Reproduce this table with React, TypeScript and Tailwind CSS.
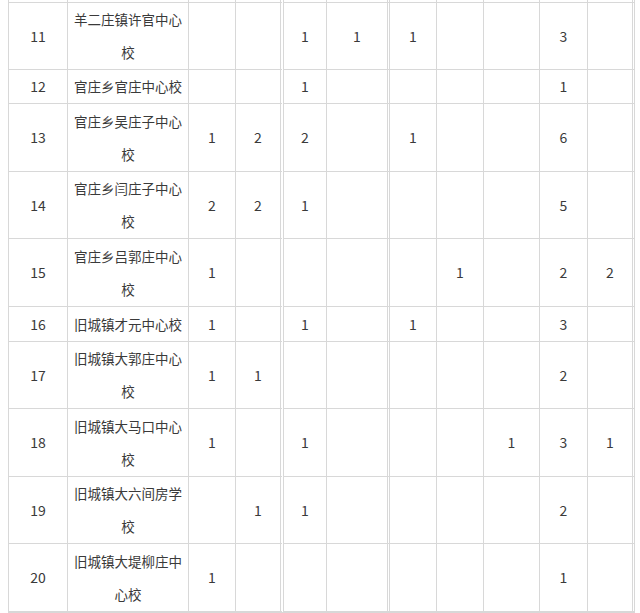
import React from 'react';

type Row = { no: number; name: string; vals: string[]; h: string };

const rows: Row[] = [
  { no: 11, name: '羊二庄镇许官中心校', vals: ['', '', '1', '1', '1', '', '', '3', ''], h: 'h-[67px]' },
  { no: 12, name: '官庄乡官庄中心校', vals: ['', '', '1', '', '', '', '', '1', ''], h: 'h-[34px]' },
  { no: 13, name: '官庄乡吴庄子中心校', vals: ['1', '2', '2', '', '1', '', '', '6', ''], h: 'h-[68px]' },
  { no: 14, name: '官庄乡闫庄子中心校', vals: ['2', '2', '1', '', '', '', '', '5', ''], h: 'h-[67px]' },
  { no: 15, name: '官庄乡吕郭庄中心校', vals: ['1', '', '', '', '', '1', '', '2', '2'], h: 'h-[68px]' },
  { no: 16, name: '旧城镇才元中心校', vals: ['1', '', '1', '', '1', '', '', '3', ''], h: 'h-[35px]' },
  { no: 17, name: '旧城镇大郭庄中心校', vals: ['1', '1', '', '', '', '', '', '2', ''], h: 'h-[66px]' },
  { no: 18, name: '旧城镇大马口中心校', vals: ['1', '', '1', '', '', '', '1', '3', '1'], h: 'h-[68px]' },
  { no: 19, name: '旧城镇大六间房学校', vals: ['', '1', '1', '', '', '', '', '2', ''], h: 'h-[67px]' },
  { no: 20, name: '旧城镇大堤柳庄中心校', vals: ['1', '', '', '', '', '', '', '1', ''], h: 'h-[68px]' },
];

// widths of the 11 columns, borders included
const widths = [
  'w-[60px] border-l',
  'w-[121px]',
  'w-[47px]',
  'w-[48px] border-r-[4px] border-double',
  'w-[43px]',
  'w-[63px] border-r-[3px] border-double',
  'w-[47px]',
  'w-[47px]',
  'w-[56px]',
  'w-[48px]',
  'w-[47px] border-r-[3px] border-double',
];

const cell = 'border-r border-b border-[#d8d8d8] p-0 text-center align-middle';

const App: React.FC = () => {
  return (
    <div
      className="h-[613px] w-[640px] overflow-hidden bg-white text-[13.5px] leading-[33px] text-[#3a3a3a]"
      style={{ fontFamily: '"Noto Sans CJK SC", "Noto Sans", sans-serif' }}
    >
      <table className="ml-[8px] w-[627px] table-fixed border-separate border-spacing-0">
        <tbody>
          {/* tail of the previous row */}
          <tr className="h-[3px]">
            {widths.map((w, i) => (
              <td key={i} className={`${cell} ${w} leading-none`} />
            ))}
          </tr>

          {rows.map((r) => (
            <tr key={r.no} className={r.h}>
              <td className={`${cell} ${widths[0]} text-[14px]`}>{r.no}</td>
              <td className={`${cell} ${widths[1]} px-[2px]`}>{r.name}</td>
              {r.vals.map((v, i) => (
                <td key={i} className={`${cell} ${widths[i + 2]} text-[14px]`}>
                  {v}
                </td>
              ))}
            </tr>
          ))}

          {/* start of the next row */}
          <tr className="h-[40px]">
            {widths.map((w, i) => (
              <td key={i} className={`${cell} ${w} border-t-[2px] border-double`} />
            ))}
          </tr>
        </tbody>
      </table>
    </div>
  );
};

export default App;
